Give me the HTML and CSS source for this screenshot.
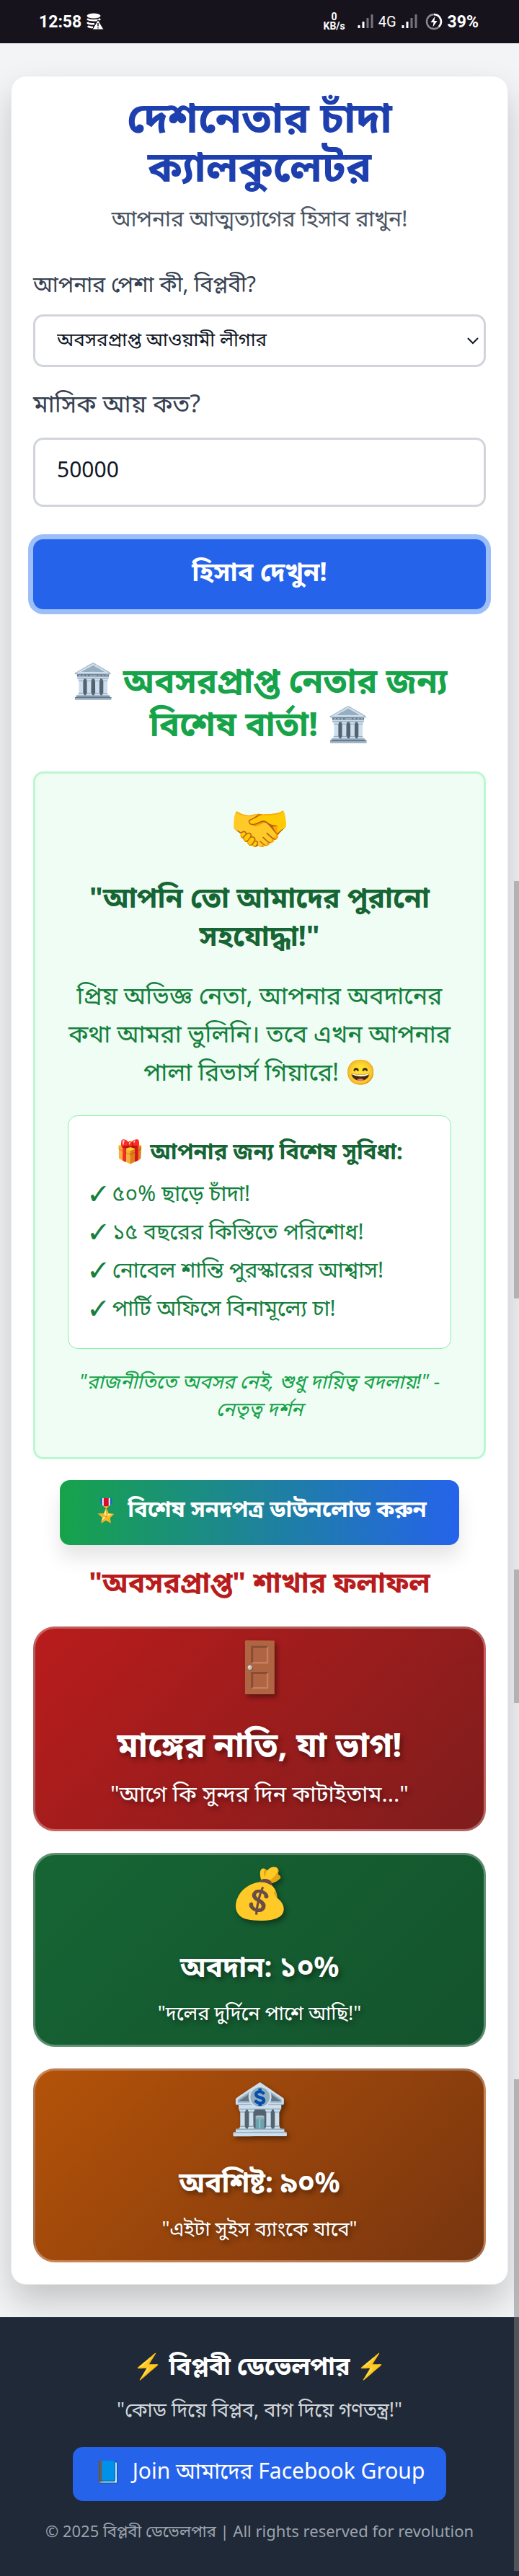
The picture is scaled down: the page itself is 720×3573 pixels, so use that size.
FILE: index.html
```html
<!DOCTYPE html>
<html lang="bn">
<head>
<meta charset="utf-8">
<meta name="viewport" content="width=device-width, initial-scale=1">
<title>দেশনেতার চাঁদা ক্যালকুলেটর</title>
<link rel="stylesheet" href="styles.css">
</head>
<body>
<div class="status">
  <div class="status-side">
    <span class="clock">12:58</span>
    <svg class="db" viewBox="0 0 24 24" aria-hidden="true">
      <ellipse cx="10" cy="4" rx="9.500" ry="3.500" fill="#fff"/>
      <path d="M1 8c2 3 16 3 18 0M1 13c1.500 2 6 2.600 10 2M2 18c1 1.500 4 2 7 2" fill="none" stroke="#fff" stroke-width="2.600"/>
      <path d="M16 9.500 24 23H8z" fill="#fff" stroke="#17131d" stroke-width="1"/>
      <path d="M16 14v4.500M16 20v1.500" stroke="#17131d" stroke-width="1.500"/>
    </svg>
  </div>
  <div class="status-side">
    <span class="rate"><span>0</span><span>KB/s</span></span>
    <svg class="signal" viewBox="0 0 22 20" aria-hidden="true"><path d="M2 19v-4M8 19v-9" stroke="#fff" stroke-width="3"/><path d="M14 19V5M20 19V0" stroke="#77747b" stroke-width="3"/></svg>
    <span class="net">4G</span>
    <svg class="signal" viewBox="0 0 22 20" aria-hidden="true"><path d="M2 19v-4M8 19v-9" stroke="#fff" stroke-width="3"/><path d="M14 19V5M20 19V0" stroke="#77747b" stroke-width="3"/></svg>
    <svg class="power" viewBox="0 0 24 24" aria-hidden="true"><circle cx="12" cy="12" r="10" fill="none" stroke="#8b898f" stroke-width="2.500"/><path d="M12 2a10 10 0 0 1 7 17" fill="none" stroke="#fff" stroke-width="2.500"/><path d="M13.500 4.500 7.500 13H11.500L10.500 19.500 16.500 11H12.500z" fill="#fff"/></svg>
    <span class="battery">39%</span>
  </div>
</div>

<main class="card">
  <header class="intro">
    <h1>দেশনেতার চাঁদা ক্যালকুলেটর</h1>
    <p>আপনার আত্মত্যাগের হিসাব রাখুন!</p>
  </header>

  <form class="form">
    <label class="label-job" for="job">আপনার পেশা কী, বিপ্লবী?</label>
    <div class="select-wrap">
      <select id="job"><option>অবসরপ্রাপ্ত আওয়ামী লীগার</option></select>
      <svg class="chevron" viewBox="0 0 16 10" aria-hidden="true"><path d="M1 1l7 7 7-7" fill="none" stroke="#111827" stroke-width="2"/></svg>
    </div>
    <label class="label-income" for="income">মাসিক আয় কত?</label>
    <input id="income" type="text" inputmode="numeric" value="50000">
    <button class="submit" type="button">হিসাব দেখুন!</button>
  </form>

  <h2 class="notice-title">🏛️ অবসরপ্রাপ্ত নেতার জন্য বিশেষ বার্তা! 🏛️</h2>
  <section class="notice">
    <div class="notice-icon">🤝</div>
    <h3>"আপনি তো আমাদের পুরানো সহযোদ্ধা!"</h3>
    <p class="notice-text">প্রিয় অভিজ্ঞ নেতা, আপনার অবদানের কথা আমরা ভুলিনি। তবে এখন আপনার পালা রিভার্স গিয়ারে! 😄</p>
    <div class="perks">
      <h4>🎁 আপনার জন্য বিশেষ সুবিধা:</h4>
      <ul>
        <li>✓ ৫০% ছাড়ে চাঁদা!</li>
        <li>✓ ১৫ বছরের কিস্তিতে পরিশোধ!</li>
        <li>✓ নোবেল শান্তি পুরস্কারের আশ্বাস!</li>
        <li>✓ পার্টি অফিসে বিনামূল্যে চা!</li>
      </ul>
    </div>
    <p class="quote">"রাজনীতিতে অবসর নেই, শুধু দায়িত্ব বদলায়!" - নেতৃত্ব দর্শন</p>
  </section>
  <button class="download" type="button"><span>🎖️</span>বিশেষ সনদপত্র ডাউনলোড করুন</button>

  <h2 class="result-title">"অবসরপ্রাপ্ত" শাখার ফলাফল</h2>
  <div class="results">
    <article class="result red"><div class="result-icon">🚪</div><h3>মাঙ্গের নাতি, যা ভাগ!</h3><p>"আগে কি সুন্দর দিন কাটাইতাম..."</p></article>
    <article class="result green"><div class="result-icon">💰</div><h3>অবদান: ১০%</h3><p>"দলের দুর্দিনে পাশে আছি!"</p></article>
    <article class="result orange"><div class="result-icon">🏦</div><h3>অবশিষ্ট: ৯০%</h3><p>"এইটা সুইস ব্যাংকে যাবে"</p></article>
  </div>
</main>

<footer class="footer">
  <h2>⚡ বিপ্লবী ডেভেলপার ⚡</h2>
  <p class="motto">"কোড দিয়ে বিপ্লব, বাগ দিয়ে গণতন্ত্র!"</p>
  <a class="join" href="#"><span>📘</span>Join আমাদের Facebook Group</a>
  <p class="copy">© 2025 বিপ্লবী ডেভেলপার | All rights reserved for revolution</p>
</footer>
<div class="thumb thumb-a"></div>
<div class="thumb thumb-b"></div>
<div class="thumb thumb-c"></div>
</body>
</html>
```

FILE: styles.css
```css
* { box-sizing: border-box; margin: 0; padding: 0; }
body {
  position: relative;
  background: #f3f4f6;
  color: #111827;
  font-family: "Noto Sans", "Noto Sans Bengali", sans-serif;
  font-size: 30px;
}
ul { list-style: none; }
button, input, select { font: inherit; color: inherit; }

.status {
  display: flex; align-items: center; justify-content: space-between;
  height: 60px; padding: 0 56px 0 54px;
  background: #17131d; color: #fff; font-family: Roboto, sans-serif;
}
.status-side { display: flex; align-items: center; gap: 7px; }
.clock, .battery { font-size: 23px; font-weight: 700; }
.db { width: 24px; height: 24px; }
.rate { display: flex; flex-direction: column; align-items: center; margin-right: 10px; font-size: 14px; line-height: 13px; font-weight: 700; }
.net { font-size: 20px; }
.signal { width: 22px; height: 20px; }
.power { width: 24px; height: 24px; margin-left: 4px; }

.card {
  margin: 46px 16px;
  padding: 21px 30px 30px;
  background: #fff; border-radius: 20px;
  box-shadow: 0 0 0 1px #e9eaec, 0 24px 48px rgba(0, 0, 0, .2);
}
.intro { text-align: center; }
h1 { color: #1e40af; font-size: 59px; line-height: 68px; font-weight: 700; padding: 0 60px; }
.intro p { color: #4b5563; font-size: 30px; line-height: 52px; margin-top: 14px; }

.form { display: flex; flex-direction: column; margin-top: 43px; color: #374151; }
.label-job { font-size: 30px; line-height: 44px; }
.label-income { font-size: 34px; line-height: 48px; margin-top: 26px; }
.select-wrap { position: relative; margin-top: 20px; }
select, input {
  width: 100%; background: #fff; color: #111827;
  border: 3px solid #d1d5db; border-radius: 14px; padding: 0 30px;
}
select { appearance: none; height: 73px; font-size: 26px; padding-bottom: 6px; }
.chevron { position: absolute; right: 10px; top: 32px; width: 16px; height: 10px; }
input { height: 96px; margin-top: 24px; padding-bottom: 10px; font-size: 30px; }
.submit {
  margin-top: 45px; height: 97px; padding-bottom: 4px; border: 0; border-radius: 14px;
  background: #2563eb; color: #fff; font-size: 36px; font-weight: 700;
  box-shadow: 0 0 0 7px #9dbff9;
}

.notice-title { margin: 68px 40px 0; text-align: center; color: #16a34a; font-size: 47px; line-height: 60px; font-weight: 700; }
.notice {
  margin-top: 37px; padding: 30px 45px 48px; text-align: center;
  background: #f0fdf4; border: 3px solid #bbf7d0; border-radius: 14px;
}
.notice-icon { font-size: 68px; line-height: 88px; }
.notice h3 { margin-top: 26px; color: #166534; font-size: 39px; line-height: 53px; }
.notice-text { margin-top: 31px; color: #15803d; font-size: 34px; line-height: 53px; }
.perks { margin-top: 34px; padding: 26px 30px 30px; background: #fff; border: 1px solid #86efac; border-radius: 14px; color: #15803d; }
.perks h4 { color: #166534; font-size: 31px; line-height: 44px; }
.perks ul { margin-top: 10px; text-align: left; font-size: 30px; line-height: 53px; }
.quote { margin-top: 26px; color: #16a34a; font-size: 27px; line-height: 38px; font-style: italic; }
.download {
  display: flex; align-items: center; justify-content: center; gap: 10px;
  height: 90px; margin: 29px auto 0; padding: 0 45px 8px; border: 0; border-radius: 14px;
  background: linear-gradient(90deg, #16a34a, #2563eb); color: #fff;
  font-size: 31px; font-weight: 700; box-shadow: 0 18px 27px rgba(0, 0, 0, .1);
}
.result-title { margin-top: 26px; text-align: center; color: #b91c1c; font-size: 39px; line-height: 50px; }
.results { display: grid; gap: 30px; margin-top: 37px; }
.result {
  padding: 6px 24px 22px; text-align: center; color: #fff;
  border: 3px solid rgba(255, 255, 255, .3); border-radius: 30px;
  text-shadow: 3px 4px 7px rgba(0, 0, 0, .4);
}
.result-icon { font-size: 68px; line-height: 90px; }
.result h3 { margin-top: 28px; font-size: 39px; line-height: 60px; }
.result p { margin-top: 13px; font-size: 27px; line-height: 44px; }
.red { padding-bottom: 28px; background: linear-gradient(135deg, #b91c1c, #7f1d1d); }
.green { background: linear-gradient(135deg, #166534, #14532d); }
.orange { background: linear-gradient(135deg, #b45309, #78350f); }
.red h3 { margin-top: 34px; font-size: 47px; }
.red p { margin-top: 16px; font-size: 31px; }

.footer {
  display: flex; flex-direction: column; align-items: center;
  padding: 42px 20px 44px; background: #1f2937; color: #fff; text-align: center;
}
.footer h2 { font-size: 34px; line-height: 50px; }
.motto { margin-top: 17px; color: #d1d5db; font-size: 27px; line-height: 38px; }
.join {
  display: flex; align-items: center; gap: 16px; height: 75px; margin-top: 33px; padding: 0 30px 8px;
  background: #2563eb; color: #fff; border-radius: 14px; text-decoration: none; font-size: 30px;
}
.copy { margin-top: 22px; color: #9ca3af; font-size: 22px; line-height: 38px; }

.thumb { position: absolute; right: 0; width: 7px; background: rgba(128, 128, 128, .5); }
.thumb-a { top: 1222px; height: 579px; }
.thumb-b { top: 2177px; height: 185px; }
.thumb-c { top: 2884px; height: 682px; }
```
